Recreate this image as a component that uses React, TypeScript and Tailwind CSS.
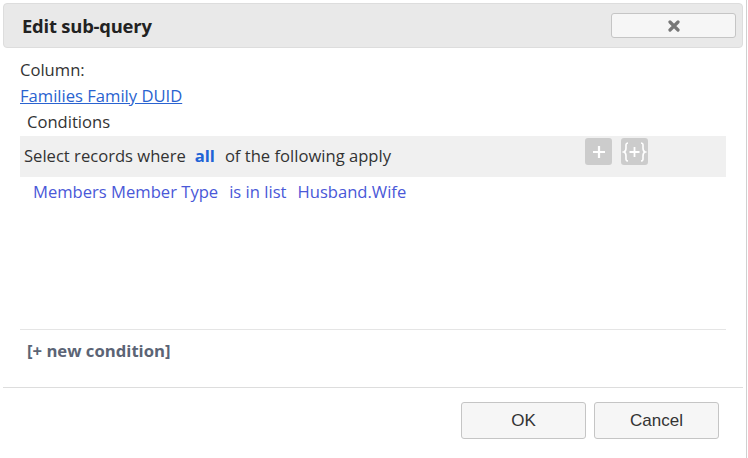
import React from 'react';

const FONT = { fontFamily: '"Open Sans", Lato, sans-serif' };

const App: React.FC = () => {
  return (
    <div className="h-[458px] w-[748px] bg-white" style={FONT}>
      <div className="flex h-full w-[747px] flex-col border-r border-[#d0d0d0] p-[3px]">
        {/* Title bar */}
        <div className="flex h-[45px] items-center justify-between rounded-[4px] border border-[#dddddd] bg-[#e9e9e9] pl-[18px] pr-[6px]">
          <h1 className="text-[18.4px] font-bold tracking-[-0.2px] text-[#222]">Edit sub-query</h1>
          <button className="flex h-[25px] w-[125px] items-center justify-center rounded-[3px] border border-[#c5c5c5] bg-[#f6f6f6]">
            <svg width="12" height="12" viewBox="0 0 12 12">
              <path d="M2 2 L10 10 M10 2 L2 10" stroke="#777" strokeWidth="3.2" strokeLinecap="round" />
            </svg>
          </button>
        </div>

        {/* Body */}
        <div className="flex flex-1 flex-col px-[17px] pt-[9px] text-[16.6px] text-[#333]">
          <div className="h-[26px] leading-[26px]">Column:</div>
          <a className="h-[26px] w-fit leading-[26px] text-[#2a63d0] underline">Families Family DUID</a>
          <div className="h-[26px] pl-[7px] leading-[26px]">Conditions</div>
          <div className="mt-[1px] flex h-[41px] items-start bg-[#f0f0f0] pl-[4px]">
            <div className="flex h-[41px] items-center">
              <span>Select records where</span>
              <span className="ml-[9px] font-bold text-[#1f64d6]">all</span>
              <span className="ml-[10px]">of the following apply</span>
            </div>
            <div className="ml-auto mr-[78px] mt-[2px] flex gap-[9px]">
              <span className="flex h-[27px] w-[27px] items-center justify-center rounded-[3px] bg-[#cccccc]">
                <svg width="16" height="16" viewBox="0 0 16 16">
                  <path d="M8 2 V14 M2 8 H14" stroke="#fff" strokeWidth="2.2" />
                </svg>
              </span>
              <span className="flex h-[27px] w-[27px] items-center justify-center rounded-[3px] bg-[#cccccc]">
                <svg width="25" height="22" viewBox="0 0 25 22" fill="none" stroke="#fff" strokeWidth="1.6">
                  <path d="M6 2 C3.5 2 4 4 4 7 C4 9.5 3.5 10.5 1.8 11 C3.5 11.5 4 12.5 4 15 C4 18 3.5 20 6 20" />
                  <path d="M19 2 C21.5 2 21 4 21 7 C21 9.5 21.5 10.5 23.2 11 C21.5 11.5 21 12.5 21 15 C21 18 21.5 20 19 20" />
                  <path d="M12.5 6 V16 M7.5 11 H17.5" strokeWidth="1.8" />
                </svg>
              </span>
            </div>
          </div>
          <div className="mt-[3px] flex h-[25px] items-center gap-[11px] pl-[13px] text-[#4a58d8]">
            <span>Members Member Type</span>
            <span>is in list</span>
            <span>Husband.Wife</span>
          </div>
          <div className="mt-[124px] border-t border-[#e5e5e5]" />
          <div className="pl-[7px] pt-[8px] text-[16.7px] font-bold text-[#5b6475]">[+ new condition]</div>
        </div>

        {/* Footer */}
        <div className="flex h-[68px] items-start justify-end gap-[8px] border-t border-[#dddddd] pr-[24px] pt-[14px]" style={{ fontFamily: '"Liberation Sans", Arial, sans-serif' }}>
          <button className="h-[37px] w-[125px] rounded-[3px] border border-[#c5c5c5] bg-[#f6f6f6] text-[17px] text-[#333]">OK</button>
          <button className="h-[37px] w-[125px] rounded-[3px] border border-[#c5c5c5] bg-[#f6f6f6] text-[17px] text-[#333]">Cancel</button>
        </div>
      </div>
    </div>
  );
};

export default App;
